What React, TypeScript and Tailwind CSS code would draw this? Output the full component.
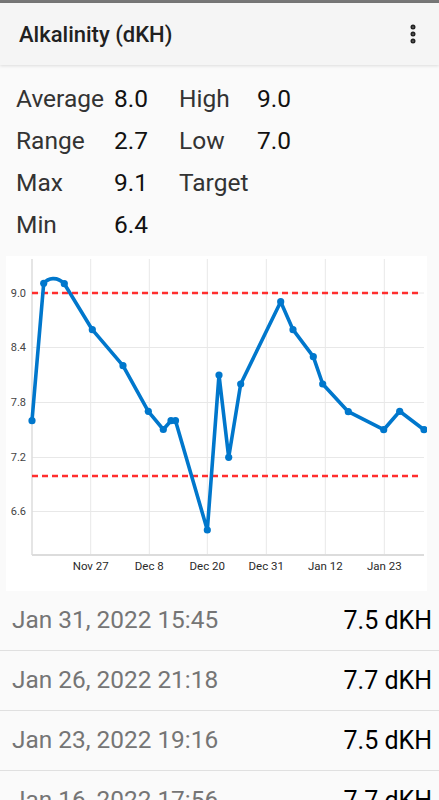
import { EllipsisVertical } from "lucide-react";

const STATS: [string, string, string, string][] = [
  ["Average", "8.0", "High", "9.0"],
  ["Range", "2.7", "Low", "7.0"],
  ["Max", "9.1", "Target", ""],
  ["Min", "6.4", "", ""],
];

const READINGS = [
  { date: "Jan 31, 2022 15:45", value: "7.5 dKH" },
  { date: "Jan 26, 2022 21:18", value: "7.7 dKH" },
  { date: "Jan 23, 2022 19:16", value: "7.5 dKH" },
  { date: "Jan 16, 2022 17:56", value: "7.7 dKH" },
];

// plot coordinates (page pixels)
const LEFT = 32;
const RIGHT = 424;
const TOP = 260;
const BOTTOM = 556;

const Y_TICKS = [
  { label: "9.0", y: 294 },
  { label: "8.4", y: 348.5 },
  { label: "7.8", y: 403.5 },
  { label: "7.2", y: 458.5 },
  { label: "6.6", y: 512.5 },
];

const X_TICKS = [
  { label: "Nov 27", x: 90.7 },
  { label: "Dec 8", x: 149.3 },
  { label: "Dec 20", x: 207.3 },
  { label: "Dec 31", x: 266.3 },
  { label: "Jan 12", x: 325.3 },
  { label: "Jan 23", x: 384.3 },
];

const POINTS: [number, number][] = [
  [32, 421.7],
  [43.7, 284.3],
  [64.3, 284.7],
  [92.3, 330.7],
  [123, 366.7],
  [148.3, 412.3],
  [163.3, 430.5],
  [171, 421.7],
  [175.5, 421.7],
  [207.3, 531],
  [219, 376],
  [228.7, 458.3],
  [240.7, 385],
  [280.7, 302.7],
  [293, 330.7],
  [313.3, 357.7],
  [322.7, 385],
  [348.3, 412.7],
  [383.7, 430.7],
  [399.7, 412.3],
  [424, 430.7],
];

function linePath() {
  let d = `M${POINTS[0][0]},${POINTS[0][1]}`;
  POINTS.slice(1).forEach(([x, y], i) => {
    if (i === 1) {
      // the short hop between the two 9.1 readings bows upward
      d += ` C48,279 57,277 ${x},${y}`;
    } else {
      d += ` L${x},${y}`;
    }
  });
  return d;
}

function Chart() {
  return (
    <svg width={421} height={335} viewBox="6 257 421 335" className="block">
      {Y_TICKS.map((t) => (
        <g key={t.label}>
          <line x1={LEFT} x2={RIGHT} y1={t.y} y2={t.y} stroke="#e8e8e8" strokeWidth={1} />
          <text
            x={26}
            y={t.y + 3.8}
            textAnchor="end"
            fontSize={11}
            fill="#444"
            fontFamily="Roboto, sans-serif"
          >
            {t.label}
          </text>
        </g>
      ))}
      {X_TICKS.map((t) => (
        <g key={t.label}>
          <line x1={t.x} x2={t.x} y1={TOP} y2={BOTTOM} stroke="#e8e8e8" strokeWidth={1} />
          <text
            x={t.x}
            y={570.7}
            textAnchor="middle"
            fontSize={11.5}
            fill="#2a2a2a"
            fontFamily="Roboto, sans-serif"
          >
            {t.label}
          </text>
        </g>
      ))}
      <line x1={LEFT} x2={LEFT} y1={TOP} y2={BOTTOM} stroke="#dcdcdc" strokeWidth={1.5} />
      <line x1={LEFT} x2={RIGHT} y1={BOTTOM} y2={BOTTOM} stroke="#dcdcdc" strokeWidth={2} />

      {/* high / low limits */}
      <line x1={LEFT} x2={421} y1={294} y2={294} stroke="#ff2e2e" strokeWidth={2.6} strokeDasharray="6 4" />
      <line x1={LEFT} x2={421} y1={477} y2={477} stroke="#ff2e2e" strokeWidth={2.6} strokeDasharray="6 4" />

      <path d={linePath()} fill="none" stroke="#0077cc" strokeWidth={3.6} strokeLinejoin="round" />
      {POINTS.map(([x, y], i) => (
        <circle key={i} cx={x} cy={y} r={3.6} fill="#0077cc" />
      ))}
    </svg>
  );
}

export default function App() {
  return (
    <div className="w-[439px] h-[800px] overflow-hidden bg-[#fafafa] font-['Roboto',sans-serif]">
      <div className="h-[3px] bg-[#777]" />
      <header className="relative z-10 h-[62px] flex items-center justify-between pl-[19px] pr-[14px] bg-[#f5f5f5] shadow-[0_1px_3px_rgba(0,0,0,0.12)]">
        <h1 className="text-[22px] font-medium text-[#212121]">Alkalinity (dKH)</h1>
        <EllipsisVertical size={24} strokeWidth={3} className="text-[#222]" />
      </header>

      {/* Summary stats */}
      <div className="pt-[13px] pl-[16px]">
        {STATS.map((row) => (
          <div
            key={row[0]}
            className="grid grid-cols-[98px_65px_78px_auto] h-[42px] items-center text-[24.5px] leading-none text-[#333]"
          >
            <span>{row[0]}</span>
            <span className="text-[#111]">{row[1]}</span>
            <span>{row[2]}</span>
            <span className="text-[#111]">{row[3]}</span>
          </div>
        ))}
      </div>

      <div className="mt-[10px] ml-[6px] w-[421px] h-[335px] bg-white">
        <Chart />
      </div>

      {/* Reading list */}
      <ul>
        {READINGS.map((r) => (
          <li
            key={r.date}
            className="h-[60px] flex items-center justify-between pl-[12px] pr-[7px] border-b border-[#e0e0e0]"
          >
            <span className="text-[24.4px] text-[#757575]">{r.date}</span>
            <span className="text-[25px] text-black">{r.value}</span>
          </li>
        ))}
      </ul>
    </div>
  );
}
